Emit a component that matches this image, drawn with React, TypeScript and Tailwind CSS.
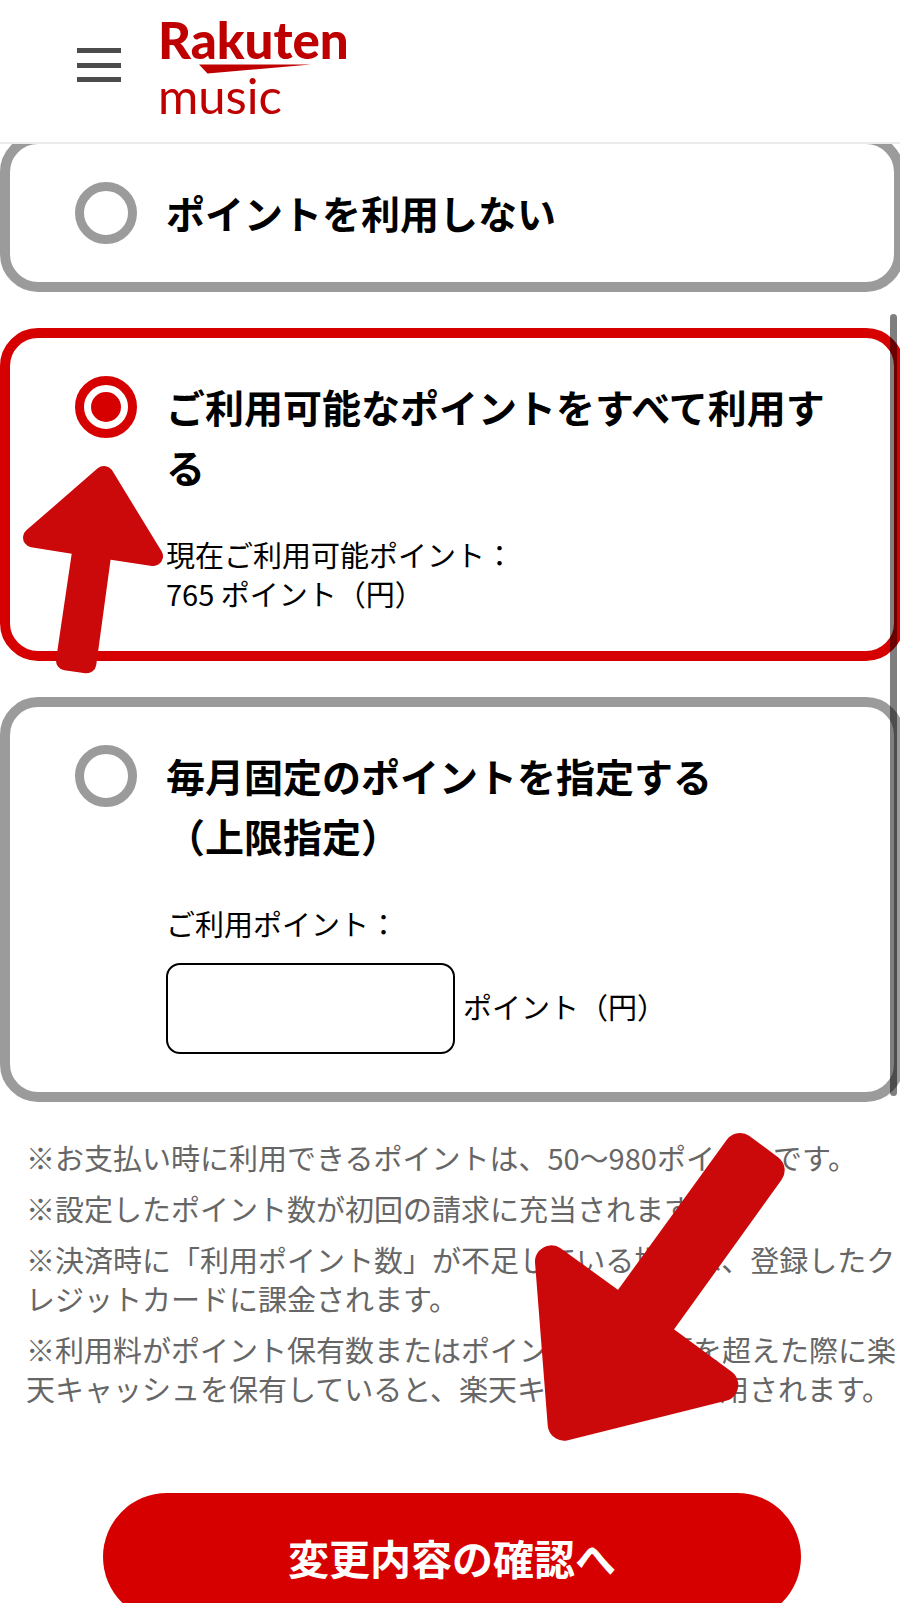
import { useState } from "react"

interface OptionCardProps {
    id: string,
    title: string,
    checked: boolean,
    onSelect: (id: string) => void,
    children?: React.ReactNode
}

const notes = [
    "※お支払い時に利用できるポイントは、50〜980ポイントです。",
    "※設定したポイント数が初回の請求に充当されます。",
    "※決済時に「利用ポイント数」が不足している場合は、登録したクレジットカードに課金されます。",
    "※利用料がポイント保有数またはポイント設定金額を超えた際に楽天キャッシュを保有していると、楽天キャッシュが利用されます。",
]

const Header = () => (
    <header className="flex shrink-0 items-start border-b-2 border-[#ebebeb] bg-white h-36 pl-[77px]">
        <button type="button" aria-label="メニュー" className="mt-12 cursor-pointer">
            <svg width="44" height="34" viewBox="0 0 44 34" fill="#4c4c4c">
                <rect width="44" height="5" />
                <rect y="15" width="44" height="5" />
                <rect y="29" width="44" height="5" />
            </svg>
        </button>
        <a href="#" aria-label="Rakuten music" className="ml-[37px] mt-1">
            <svg width="220" height="130" viewBox="0 0 220 130" fill="#bf0000">
                <text x="0" y="55" fontSize="51" className="font-[Lato] font-black">Rakuten</text>
                <path d="M41 60.5H153L49.500 69.500Z" />
                <text x="0" y="110" fontSize="49" className="font-[Lato]">music</text>
            </svg>
        </a>
    </header>
)

const OptionCard: React.FC<OptionCardProps> = ({ id, title, checked, onSelect, children }) => (
    <section className={`flex items-start gap-[29px] rounded-[38px] border-10 bg-white py-[38px] pl-[65px] pr-14 ${checked ? "border-[#d70000]" : "border-[#9b9b9b]"}`}>
        <input
            type="radio"
            id={id}
            name="point"
            checked={checked}
            onChange={() => onSelect(id)}
            className="size-[62px] shrink-0 appearance-none rounded-full border-[9px] border-[#9b9b9b] bg-white bg-clip-content p-[7px] checked:border-[#d70000] checked:bg-[#d70000]"
        />
        <div className="min-w-0 flex-1">
            <label htmlFor={id} className="block whitespace-pre-line text-[39px] leading-[60px] font-bold">{title}</label>
            {children}
        </div>
    </section>
)

// big hand-placed arrows over the form
const Arrows = () => (
    <>
        <svg className="pointer-events-none absolute left-5 top-[319px]" width="147" height="213" viewBox="60 460 441 639" aria-hidden="true">
            <path
                d="M312 498L460 740L307 717L260 1062L197 1053L248 708L98 684Z"
                fill="#cb090b" stroke="#cb090b" strokeWidth="58" strokeLinejoin="round"
            />
        </svg>
        <svg className="pointer-events-none absolute left-[530px] top-[986px]" width="260" height="314" viewBox="240 60 780 942" aria-hidden="true">
            <path
                d="M342 943L304 455L515 608L870 118L955 181L604 669L816 825Z"
                fill="#cb090b" stroke="#cb090b" strokeWidth="98" strokeLinejoin="round"
            />
        </svg>
    </>
)

const App = () => {
    const [selected, setSelected] = useState("all")
    const [point, setPoint] = useState("")

    return (
        <div className="flex h-screen flex-col overflow-hidden bg-white font-['Noto_Sans_CJK_JP',sans-serif] text-[29px] leading-[39px] text-black">
            <Header />
            <main className="relative flex-1 overflow-hidden">
                <form className="-mr-1 -mt-[10px]" onSubmit={(e) => e.preventDefault()}>
                    <div className="flex flex-col gap-9">
                        <OptionCard id="none" title="ポイントを利用しない" checked={selected === "none"} onSelect={setSelected} />
                        <OptionCard id="all" title="ご利用可能なポイントをすべて利用する" checked={selected === "all"} onSelect={setSelected}>
                            <p className="mt-[39px]">現在ご利用可能ポイント：</p>
                            <p>765 ポイント（円）</p>
                        </OptionCard>
                        <OptionCard id="fixed" title={"毎月固定のポイントを指定する\n（上限指定）"} checked={selected === "fixed"} onSelect={setSelected}>
                            <label htmlFor="amount" className="mt-[39px] block">ご利用ポイント：</label>
                            <div className="mt-5 flex items-center gap-2">
                                <input
                                    type="text"
                                    id="amount"
                                    inputMode="numeric"
                                    value={point}
                                    onChange={(e) => setPoint(e.target.value)}
                                    className="h-[91px] w-[289px] rounded-[14px] border-2 border-black px-4"
                                />
                                <span className="pb-1">ポイント（円）</span>
                            </div>
                        </OptionCard>
                    </div>
                    <div className="mt-9 flex flex-col gap-3 pl-[26px] pr-1 text-[#666666]">
                        {notes.map((n) => (
                            <p key={n}>{n}</p>
                        ))}
                    </div>
                    <div className="mt-[85px] px-[103px]">
                        <button type="submit" className="h-32 w-full cursor-pointer rounded-full bg-[#d70000] text-[41px] font-bold text-white">
                            変更内容の確認へ
                        </button>
                    </div>
                </form>
                <div className="absolute right-[3px] top-[170px] h-[782px] w-[7px] rounded-full bg-black/50" />
                <Arrows />
            </main>
        </div>
    )
}

export default App
